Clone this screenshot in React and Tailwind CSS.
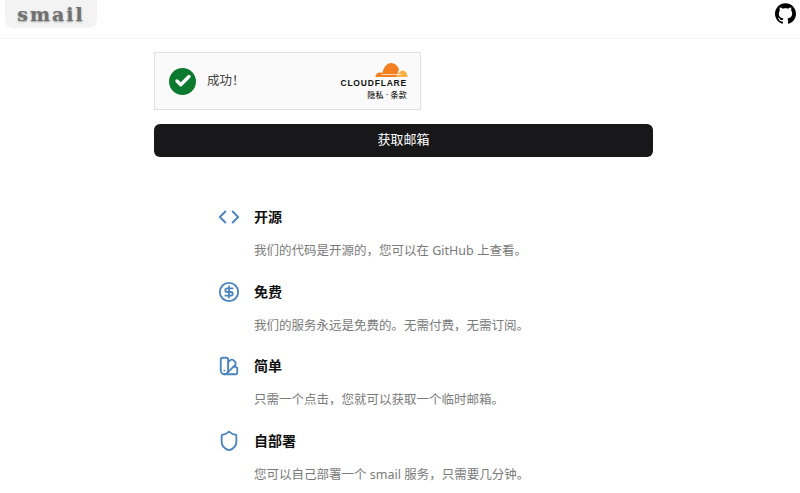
import { Code, CircleDollarSign, SwatchBook, Shield, Check } from 'lucide-react';
import { SiGithub } from 'react-icons/si';

const features = [
  { icon: Code, title: '开源', desc: '我们的代码是开源的，您可以在 GitHub 上查看。' },
  { icon: CircleDollarSign, title: '免费', desc: '我们的服务永远是免费的。无需付费，无需订阅。' },
  { icon: SwatchBook, title: '简单', desc: '只需一个点击，您就可以获取一个临时邮箱。' },
  { icon: Shield, title: '自部署', desc: '您可以自己部署一个 smail 服务，只需要几分钟。' },
];

function CloudflareLogo() {
  return (
    <div className="flex flex-col items-end">
      <svg viewBox="0 0 36 17" className="h-[17px] w-[34px] mr-[-1px]">
        <path d="M1.500 16.500C1.500 13.500 4 11.500 7 11.800C8 11.800 8.500 12 9 12.200C10 6 14 1.500 18 1.500C22 1.500 25 4.500 26.500 8L24 16.500Z" fill="#f38020" />
        <path d="M24.500 16.500C25.500 12 28 9.500 30.500 9.500C33.500 10 35.500 13 35.500 16.500Z" fill="#faae40" />
        <path d="M8 13.800H29" stroke="#ffffff" strokeWidth="0.700" />
      </svg>
      <div className="text-[8.500px] leading-[9px] font-black tracking-[0.800px] text-[#111] font-['Liberation_Sans',sans-serif] mt-[1px]">CLOUDFLARE</div>
      <div className="text-[8px] leading-[12px] font-medium text-[#222] mt-[1px] tracking-[0.200px]">隐私 · 条款</div>
    </div>
  );
}

function FeatureRow({ icon: Icon, title, desc }) {
  return (
    <div className="flex h-[74.500px]">
      <div className="w-[36px] shrink-0 pt-[5px]">
        <Icon className="h-[22px] w-[22px] text-[#4a84c0]" strokeWidth={2} />
      </div>
      <div>
        <div className="text-[14px] leading-[32px] font-semibold text-[#111]">{title}</div>
        <div className="mt-[8px] text-[12.500px] leading-[20px] text-[#7a7a7a]">{desc}</div>
      </div>
    </div>
  );
}

export default function App() {
  return (
    <div className="h-[493px] overflow-hidden bg-white font-['Noto_Sans','Noto_Sans_CJK_SC',sans-serif]">
      <header className="flex h-[39px] items-start justify-between border-b border-[#f4f4f4] pl-[5px] pr-[4px]">
        <div className="flex h-[28px] w-[92px] items-center justify-center rounded-b-lg bg-[#f3f3f3]">
          <span className="text-[19px] leading-none font-bold tracking-[2px] text-[#707070] [text-shadow:0_1px_2px_#999] font-['DejaVu_Serif',serif]">smail</span>
        </div>
        <SiGithub className="mt-[3px] h-[21px] w-[21px] text-black" />
      </header>

      <main className="ml-[154px] w-[499px] pt-[13px]">
        <div className="flex h-[58px] w-[267px] items-center justify-between border border-[#e0e0e0] bg-[#fafafa] pl-[14px] pr-[13px]">
          <div className="flex items-center gap-[11px]">
            <div className="flex h-[27px] w-[27px] items-center justify-center rounded-full bg-[#0b7a2e]">
              <Check className="h-[18px] w-[18px] text-white" strokeWidth={4.500} />
            </div>
            <span className="text-[12.500px] text-[#444]">成功！</span>
          </div>
          <CloudflareLogo />
        </div>

        <button className="mt-[14px] h-[33px] w-full rounded-md bg-[#18181b] pb-[2px] text-[13px] font-normal text-white">获取邮箱</button>

        <div className="mt-[44px] ml-[64px]">
          {features.map((f) => <FeatureRow key={f.title} {...f} />)}
        </div>
      </main>
    </div>
  );
}
